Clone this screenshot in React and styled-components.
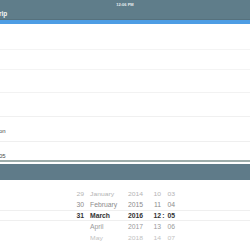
import React from "react";
import styled, { createGlobalStyle } from "styled-components";

const Global = createGlobalStyle`
  html, body { margin: 0; padding: 0; background: #fff; }
  body { width: 250px; height: 250px; overflow: hidden; font-family: "Liberation Sans", Arial, sans-serif; }
`;

const Screen = styled.div`
  width: 250px;
  height: 250px;
  display: flex;
  flex-direction: column;
  overflow: hidden;
  background: #fff;
`;

const Header = styled.div`
  height: 19px;
  background: #5f7d8a;
  display: flex;
  flex-direction: column;
  border-bottom: 1px solid #56717d;
`;

const StatusBar = styled.div`
  height: 7px;
  display: flex;
  align-items: center;
  justify-content: center;
  color: #e8eef1;
  font-size: 4px;
  font-weight: 700;
  padding-top: 1px;
`;

const Toolbar = styled.div`
  flex: 1;
  display: flex;
  align-items: center;
  color: #f4f7f8;
  font-size: 6.5px;
  font-weight: 700;
`;

const Title = styled.span`
  margin-left: -1px;
`;

const BlueBar = styled.div`
  height: 4px;
  background: #4d9de4;
`;

const List = styled.div`
  display: flex;
  flex-direction: column;
`;

const Row = styled.div`
  height: ${(p) => p.$h}px;
  border-bottom: 1px solid ${(p) => p.$line || "#f2f2f2"};
  display: flex;
  align-items: ${(p) => p.$align || "center"};
  padding-top: ${(p) => p.$pt || 0}px;
  padding-bottom: ${(p) => p.$pb || 0}px;
  box-sizing: border-box;
  color: #4a4a4a;
  font-size: 6px;
`;

const Cut = styled.span`
  margin-left: -1px;
`;

const Divider = styled.div`
  height: 2px;
  background: #9cacaa;
  margin-bottom: 2px;
`;

const PickerBar = styled.div`
  height: 16px;
  background: #5f7b89;
`;

const Picker = styled.div`
  position: relative;
  flex: 1;
  padding-top: 8px;
  display: flex;
  flex-direction: column;
`;

const Highlight = styled.div`
  position: absolute;
  left: 0;
  right: 0;
  top: 30px;
  height: 11px;
  border-top: 1px solid #efefef;
  border-bottom: 1px solid #efefef;
  box-sizing: border-box;
  pointer-events: none;
`;

const PickRow = styled.div`
  height: 11px;
  display: grid;
  grid-template-columns: 84px 44px 25px 8px 5px 9px;
  align-items: center;
  font-size: 6.8px;
  color: ${(p) => p.$color};
  font-weight: ${(p) => (p.$sel ? 700 : 400)};
  transform: scaleY(${(p) => p.$sy || 1});
`;

const Cell = styled.span`
  text-align: ${(p) => p.$align || "left"};
  padding-left: ${(p) => p.$pl || 0}px;
  white-space: nowrap;
`;

const rows = [
  { d: "29", m: "January", y: "2014", h: "10", mi: "03", c: "#b4b4b4", sy: 0.9 },
  { d: "30", m: "February", y: "2015", h: "11", mi: "04", c: "#8c8c8c" },
  { d: "31", m: "March", y: "2016", h: "12", mi: "05", c: "#333333", sel: true },
  { d: "", m: "April", y: "2017", h: "13", mi: "06", c: "#9a9a9a" },
  { d: "", m: "May", y: "2018", h: "14", mi: "07", c: "#c2c2c2", sy: 0.88 },
];

export default function App() {
  return (
    <Screen>
      <Global />
      <Header>
        <StatusBar>12:06 PM</StatusBar>
        <Toolbar>
          <Title>rip</Title>
        </Toolbar>
      </Header>
      <BlueBar />
      <List>
        <Row $h={26} $line="#f4f4f4" />
        <Row $h={20} $line="#f4f4f4" />
        <Row $h={23} $line="#f2f2f2" />
        <Row $h={24} $line="#f0f0f0" />
        <Row $h={25} $line="#efefef" $pt={3}>
          <Cut>on</Cut>
        </Row>
        <Row $h={18} $line="transparent" $align="flex-end" $pb={0}>
          <Cut>05</Cut>
        </Row>
      </List>
      <Divider />
      <PickerBar />
      <Picker>
        <Highlight />
        {rows.map((r, i) => (
          <PickRow key={i} $color={r.c} $sel={r.sel} $sy={r.sy}>
            <Cell $align="right">{r.d}</Cell>
            <Cell $pl={6}>{r.m}</Cell>
            <Cell>{r.y}</Cell>
            <Cell $align="right">{r.h}</Cell>
            <Cell $align="center">{r.sel ? ":" : ""}</Cell>
            <Cell $align="right">{r.mi}</Cell>
          </PickRow>
        ))}
      </Picker>
    </Screen>
  );
}
